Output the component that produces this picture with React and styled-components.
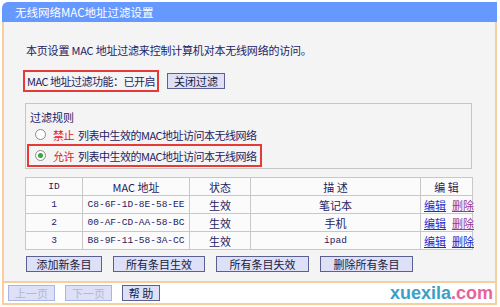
import React from 'react';
import styled, { createGlobalStyle } from 'styled-components';

const cjk = `"Noto Sans CJK SC", "Liberation Sans", sans-serif`;
const mono = `"Liberation Mono", "Noto Sans CJK SC", monospace`;
const orange = '#f7cda2';
const ink = '#1e2262';

const GlobalStyle = createGlobalStyle`
  *, *::before, *::after {
    box-sizing: border-box;
  }
  body {
    margin: 0;
    background: #ffffff;
    font-family: ${cjk};
  }
`;

const Frame = styled.div`
  width: 495px;
  margin: 2px 0 0 2px;
  font-size: 11px;
  color: ${ink};
  white-space: nowrap;
`;

const TitleBar = styled.div`
  height: 20px;
  line-height: 20px;
  background: #6699ff;
  color: #ffffff;
  padding-left: 13px;
  border-top-left-radius: 6px;
  font-size: 11.5px;
`;

const Main = styled.div`
  background: #f4f4f4;
  border-left: 2px solid ${orange};
  border-right: 2px solid ${orange};
  padding: 20px 0 9px 21px;
`;

const Intro = styled.p`
  margin: 0;
  line-height: 16px;
  padding-left: 1px;
  letter-spacing: -0.2px;
`;

const StatusRow = styled.div`
  display: flex;
  align-items: center;
  gap: 8px;
  margin-top: 12px;
  margin-left: -2px;
`;

const RedBox = styled.div`
  display: flex;
  align-items: center;
  width: fit-content;
  border: 2px solid #e53a36;
  height: ${p => p.$h}px;
  padding: 0 ${p => p.$pad || 0}px;
  margin-left: ${p => p.$ml || 0}px;
  letter-spacing: -0.5px;
`;

const Button = styled.button`
  height: 16px;
  width: ${p => p.$w}px;
  padding: 0;
  font-family: ${cjk};
  font-size: 11px;
  line-height: 14px;
  white-space: nowrap;
  background: #dde0f6;
  color: ${p => (p.disabled ? '#b4b8d0' : '#1a1a40')};
  border: 1px solid ${p => (p.disabled ? '#a8b6e4' : '#5a6090')};
  cursor: pointer;
`;

const Rules = styled.div`
  width: 447px;
  margin-top: 11px;
  border: 1px solid #c6c6c6;
  padding: 5px 0 1px 3px;
`;

const RulesTitle = styled.div`
  line-height: 16px;
  padding-left: 1px;
`;

const RuleRow = styled.div`
  display: flex;
  align-items: center;
  height: 19px;
  padding-left: ${p => p.$pl}px;
  padding-right: ${p => p.$pr || 0}px;
  letter-spacing: -0.5px;
`;

const Radio = styled.span`
  width: 11px;
  height: 11px;
  border-radius: 50%;
  border: 1px solid #8c8c8c;
  background: #ffffff;
  display: flex;
  align-items: center;
  justify-content: center;
  margin-right: 7px;
  flex: none;
  &::after {
    content: '';
    width: 5px;
    height: 5px;
    border-radius: 50%;
    background: ${p => (p.$on ? '#34a83a' : 'transparent')};
  }
`;

const Red = styled.span`
  color: #e0201c;
  margin-right: 4px;
`;

const Table = styled.table`
  width: 447px;
  margin-top: 8px;
  border-collapse: collapse;
  background: #fbfbfb;
  table-layout: fixed;
`;

const Cell = styled.td`
  border: 1px solid #c8c8c8;
  height: 18px;
  padding: 0;
  text-align: center;
  font-family: ${p => (p.$mono ? mono : cjk)};
  font-size: ${p => (p.$mono ? '9.5px' : '11px')};
  font-weight: normal;
  line-height: 16px;
  white-space: nowrap;
`;

const EditLink = styled.a`
  color: ${p => (p.$visited ? '#993399' : '#1a2ccc')};
  text-decoration: underline;
  margin: 0 3px;
  cursor: pointer;
`;

const ActionRow = styled.div`
  display: flex;
  gap: 11px;
  margin-top: 6px;
  padding-left: 1px;
`;

const Footer = styled.div`
  position: relative;
  height: 24px;
  border: 2px solid ${orange};
  background: #ffffff;
  display: flex;
  align-items: center;
  gap: 10px;
  padding-left: 4px;
`;

const Watermark = styled.div`
  position: absolute;
  right: 2px;
  top: 0;
  font-family: "Liberation Sans", Arial, sans-serif;
  font-weight: bold;
  font-size: 18px;
  line-height: 20px;
  color: #3c9fca;
  span {
    color: #e8629c;
  }
`;

const columns = [
  { label: 'ID', w: 57, mono: true },
  { label: 'MAC 地址', w: 107 },
  { label: '状态', w: 61 },
  { label: '描 述', w: 170 },
  { label: '编 辑', w: 52 },
];

const rows = [
  { id: 1, mac: 'C8-6F-1D-8E-58-EE', desc: '笔记本', visited: true },
  { id: 2, mac: '00-AF-CD-AA-58-BC', desc: '手机', visited: true },
  { id: 3, mac: 'B8-9F-11-58-3A-CC', desc: 'ipad', visited: false },
];

const App = () => (
  <Frame>
    <GlobalStyle />
    <TitleBar>无线网络MAC地址过滤设置</TitleBar>
    <Main>
      <Intro>本页设置 MAC 地址过滤来控制计算机对本无线网络的访问。</Intro>

      <StatusRow>
        <RedBox $h={22} $pad={2}>MAC 地址过滤功能：已开启</RedBox>
        <Button $w={58}>关闭过滤</Button>
      </StatusRow>

      <Rules>
        <RulesTitle>过滤规则</RulesTitle>
        <RuleRow $pl={6}>
          <Radio />
          <Red>禁止</Red>列表中生效的MAC地址访问本无线网络
        </RuleRow>
        <RedBox $h={23} $ml={-2}>
          <RuleRow $pl={6} $pr={3}>
            <Radio $on />
            <Red>允许</Red>列表中生效的MAC地址访问本无线网络
          </RuleRow>
        </RedBox>
      </Rules>

      <Table>
        <colgroup>
          {columns.map(c => <col key={c.label} style={{ width: c.w }} />)}
        </colgroup>
        <thead>
          <tr>
            {columns.map(c => (
              <Cell as="th" key={c.label} $mono={c.mono}>
                {c.label}
              </Cell>
            ))}
          </tr>
        </thead>
        <tbody>
          {rows.map(r => (
            <tr key={r.id}>
              <Cell $mono>{r.id}</Cell>
              <Cell $mono>{r.mac}</Cell>
              <Cell>生效</Cell>
              <Cell $mono={r.desc === 'ipad'}>{r.desc}</Cell>
              <Cell>
                <EditLink>编辑</EditLink>
                <EditLink $visited={r.visited}>删除</EditLink>
              </Cell>
            </tr>
          ))}
        </tbody>
      </Table>

      <ActionRow>
        <Button $w={76}>添加新条目</Button>
        <Button $w={92}>所有条目生效</Button>
        <Button $w={93}>所有条目失效</Button>
        <Button $w={93}>删除所有条目</Button>
      </ActionRow>
    </Main>
    <Footer>
      <Button $w={47} disabled>上一页</Button>
      <Button $w={47} disabled>下一页</Button>
      <Button $w={38}>帮 助</Button>
      <Watermark>xuexila<span>.com</span></Watermark>
    </Footer>
  </Frame>
);

export default App;
